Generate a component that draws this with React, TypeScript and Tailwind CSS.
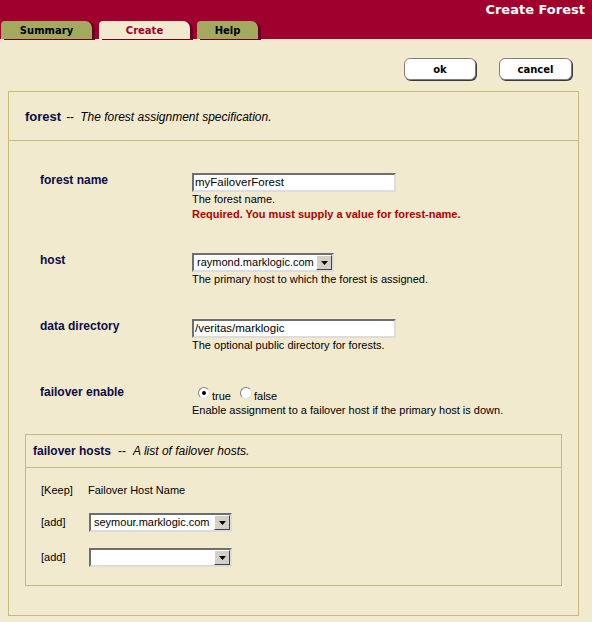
import React from 'react';

const tabs = [
  { label: 'Summary', width: 'w-[91px]', active: false },
  { label: 'Create', width: 'w-[91px]', active: true },
  { label: 'Help', width: 'w-[61px]', active: false },
];

function TextBox({ value }: { value: string }) {
  return (
    <div className="w-[204px] h-[19px] bg-white border-2 border-t-[#6e6e6e] border-l-[#6e6e6e] border-r-[#dcdcdc] border-b-[#dcdcdc] text-[11.5px] leading-[15px] pl-[1px] text-black whitespace-nowrap overflow-hidden">
      {value}
    </div>
  );
}

function DropDown({ value, width }: { value: string; width: string }) {
  return (
    <div
      className={`${width} h-[19px] flex items-center bg-white border-2 border-t-[#6e6e6e] border-l-[#6e6e6e] border-r-[#dcdcdc] border-b-[#dcdcdc]`}
    >
      <div className="flex-1 text-[11px] leading-[15px] pl-[3px] text-black whitespace-nowrap overflow-hidden">
        {value}
      </div>
      <div className="w-[16px] h-[15px] flex items-center justify-center bg-[#d4d0c8] border border-t-white border-l-white border-r-[#404040] border-b-[#404040]">
        <svg width="7" height="4" viewBox="0 0 7 4">
          <path d="M0 0h7L3.5 4z" fill="#000" />
        </svg>
      </div>
    </div>
  );
}

function Radio({ checked, label }: { checked: boolean; label: string }) {
  return (
    <div className="flex items-start gap-[2px]">
      <div className="mt-[2px] w-[12px] h-[12px] rounded-full bg-white border border-t-[#808080] border-l-[#808080] border-r-[#e0e0e0] border-b-[#e0e0e0] flex items-center justify-center">
        {checked && <div className="w-[4px] h-[4px] rounded-full bg-black" />}
      </div>
      <span className="mt-[5px] text-[11px] leading-[13px] text-black">{label}</span>
    </div>
  );
}

function Field({ label, children }: { label: string; children: React.ReactNode }) {
  return (
    <div className="flex">
      <div className="w-[152px] text-[12px] leading-[14px] font-bold text-[#0c0c48]">{label}</div>
      <div className="flex flex-col">{children}</div>
    </div>
  );
}

function Help({ children }: { children: React.ReactNode }) {
  return <div className="text-[11px] leading-[15px] text-black">{children}</div>;
}

export default function App() {
  return (
    <div className="w-[592px] h-[622px] overflow-hidden bg-[#f2eacf] font-['Liberation_Sans',Arial,sans-serif]">
      <div className="h-[39px] bg-[#a0002e] flex flex-col justify-between">
        <div className="flex justify-end pr-[7px] pt-[2px] text-[13px] leading-[16px] font-bold text-white font-['DejaVu_Sans',Verdana,sans-serif]">
          Create Forest
        </div>
        <div className="flex items-end gap-[7px] pl-[1px]">
          {tabs.map((tab) => (
            <div
              key={tab.label}
              className={`${tab.width} h-[18px] rounded-tl-[4px] rounded-tr-[7px] shadow-[3px_1px_0_#6a001f] flex items-center justify-center pt-[1px] text-[10px] font-bold font-['DejaVu_Sans',Verdana,sans-serif] ${
                tab.active ? 'bg-[#f2eacf] text-[#a0002e]' : 'bg-[#a3aa5f] text-black'
              }`}
            >
              {tab.label}
            </div>
          ))}
        </div>
      </div>

      <div className="flex justify-end gap-[23px] pr-[20px] pt-[19px]">
        <button className="w-[72px] h-[22px] rounded-[6px] bg-white border border-[#7f7f7f] shadow-[1px_1px_0_#3a3a3a] text-[10px] font-bold text-black font-['DejaVu_Sans',Verdana,sans-serif]">
          ok
        </button>
        <button className="w-[73px] h-[22px] rounded-[6px] bg-white border border-[#7f7f7f] shadow-[1px_1px_0_#3a3a3a] text-[10px] font-bold text-black font-['DejaVu_Sans',Verdana,sans-serif]">
          cancel
        </button>
      </div>

      <div className="mt-[11px] ml-[8px] w-[571px] h-[525px] border border-[#c9b87a]">
        <div className="h-[49px] border-b border-[#c9b87a] flex items-center pl-[16px] pt-[1px]">
          <span className="text-[13px] font-bold text-[#0c0c48]">forest</span>
          <span className="text-[12px] text-black ml-[5px]">--</span>
          <span className="text-[12px] italic text-black ml-[6px]">The forest assignment specification.</span>
        </div>

        <div className="pl-[31px] pt-[32px] flex flex-col gap-[32px]">
          <Field label="forest name">
            <TextBox value="myFailoverForest" />
            <Help>The forest name.</Help>
            <div className="text-[11px] leading-[14px] font-bold text-[#b00000]">
              Required. You must supply a value for forest-name.
            </div>
          </Field>
          <Field label="host">
            <DropDown value="raymond.marklogic.com" width="w-[142px]" />
            <Help>The primary host to which the forest is assigned.</Help>
          </Field>
          <Field label="data directory">
            <TextBox value="/veritas/marklogic" />
            <Help>The optional public directory for forests.</Help>
          </Field>
          <Field label="failover enable">
            <div className="h-[18px] flex gap-[9px] pl-[6px]">
              <Radio checked label="true" />
              <Radio checked={false} label="false" />
            </div>
            <Help>Enable assignment to a failover host if the primary host is down.</Help>
          </Field>
        </div>

        <div className="mt-[16px] mx-[16px] h-[152px] border border-[#c9b87a]">
          <div className="h-[33px] border-b border-[#c9b87a] flex items-center pl-[7px]">
            <span className="text-[12px] font-bold text-[#0c0c48]">failover hosts</span>
            <span className="text-[12px] text-black ml-[7px]">--</span>
            <span className="text-[12px] italic text-black ml-[7px]">A list of failover hosts.</span>
          </div>
          <div className="pl-[15px] pt-[15px] flex flex-col gap-[16px] text-[11px] text-black">
            <div className="flex leading-[14px]">
              <span className="w-[47px]">[Keep]</span>
              <span>Failover Host Name</span>
            </div>
            <div className="flex items-center">
              <span className="w-[48px]">[add]</span>
              <DropDown value="seymour.marklogic.com" width="w-[143px]" />
            </div>
            <div className="flex items-center">
              <span className="w-[48px]">[add]</span>
              <DropDown value="" width="w-[143px]" />
            </div>
          </div>
        </div>
      </div>
    </div>
  );
}
